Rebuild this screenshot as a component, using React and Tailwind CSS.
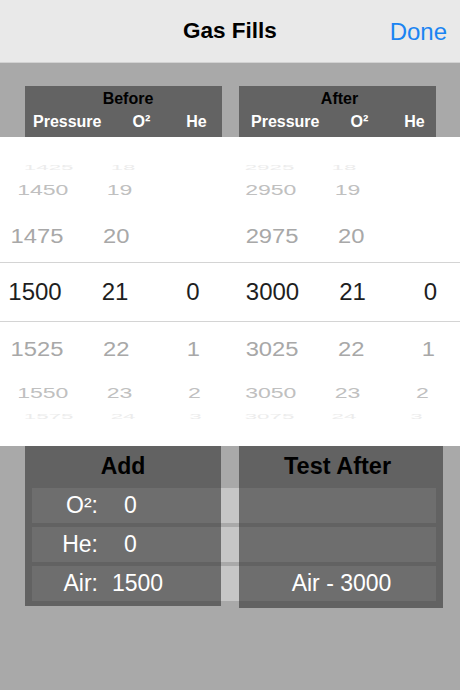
import React from "react";

const font = { fontFamily: '"Liberation Sans", Arial, sans-serif' };

// picker wheel rows: [before pressure, O2, He, after pressure, O2, He]
const wheel = [
  { v: ["1425", "18", "", "2925", "18", ""], h: "h-[20px]", c: "text-[#ececec]", t: "scale-x-[0.93] scale-y-[0.28]" },
  { v: ["1450", "19", "", "2950", "19", ""], h: "h-[26px]", c: "text-[#c0c0c0]", t: "scale-x-[0.96] scale-y-[0.6]" },
  { v: ["1475", "20", "", "2975", "20", ""], h: "h-[59px] pt-[7px]", c: "text-[#a8a8a8]", t: "scale-x-[0.99] scale-y-[0.88]" },
  { v: ["1500", "21", "0", "3000", "21", "0"], h: "h-[60px] border-y border-[#d4d4d4]", c: "text-[#1e1e1e]", t: "" },
  { v: ["1525", "22", "1", "3025", "22", "1"], h: "h-[54px]", c: "text-[#a8a8a8]", t: "scale-x-[0.99] scale-y-[0.88]" },
  { v: ["1550", "23", "2", "3050", "23", "2"], h: "h-[34px]", c: "text-[#c0c0c0]", t: "scale-x-[0.96] scale-y-[0.6]" },
  { v: ["1575", "24", "3", "3075", "24", "3"], h: "h-[10px]", c: "text-[#ececec]", t: "scale-x-[0.93] scale-y-[0.28]" },
];

const WheelRow = ({ row }) => (
  <div className={`${row.h} flex`}>
    <div
      className={`flex-1 grid grid-cols-[70px_90px_66px_93px_67px_15px_59px] items-center text-[24px] leading-none ${row.c} ${row.t}`}
    >
      <span className="text-center">{row.v[0]}</span>
      <span className="text-center">{row.v[1]}</span>
      <span className="text-center">{row.v[2]}</span>
      <span className="text-center">{row.v[3]}</span>
      <span className="text-center">{row.v[4]}</span>
      <span />
      <span className="text-center">{row.v[5]}</span>
    </div>
  </div>
);

const ColumnHead = ({ title, titlePad }) => (
  <div className="w-[197px] h-[51px] bg-[#636363] pt-[3px] flex flex-col">
    <div className={`h-[20px] leading-[20px] text-center text-[16px] font-bold text-black ${titlePad}`}>
      {title}
    </div>
    <div className="mt-[3px] h-[20px] leading-[20px] flex text-[16px] font-bold text-white">
      <span className={title === "Before" ? "ml-[8px]" : "ml-[12px]"}>Pressure</span>
      <span className="ml-[31px]">O²</span>
      <span className="ml-[36px]">He</span>
    </div>
  </div>
);

const Strip = ({ children, className = "" }) => (
  <div className={`h-[35px] bg-[#6e6e6e] flex items-center text-[23px] text-white ${className}`}>
    {children}
  </div>
);

export default function App() {
  return (
    <div className="w-[460px] h-[690px] bg-[#a9a9a9] flex flex-col overflow-hidden" style={font}>
      {/* nav bar */}
      <div className="h-[63px] bg-[#e9e9e9] border-b border-[#d2d2d2] flex items-center relative">
        <div className="flex-1 text-center text-[22.5px] font-bold text-black leading-none">Gas Fills</div>
        <button className="absolute right-[13px] top-[20px] text-[24px] leading-none text-[#1a84f2]">
          Done
        </button>
      </div>

      {/* column headers */}
      <div className="pt-[23px] pl-[25px] flex gap-[17px]">
        <ColumnHead title="Before" titlePad="pl-[9px]" />
        <ColumnHead title="After" titlePad="pl-[4px]" />
      </div>

      {/* picker */}
      <div className="h-[309px] bg-white flex flex-col pt-[20px]">
        {wheel.map((row) => (
          <WheelRow key={row.v[0]} row={row} />
        ))}
      </div>

      {/* results */}
      <div className="pl-[25px] flex items-start">
        <div className="w-[196px] h-[160px] bg-[#626262] pl-[7px] flex flex-col">
          <div className="h-[42px] leading-[40px] text-center pr-[7px] text-[23px] font-bold text-black">Add</div>
          <div className="flex flex-col gap-[4px]">
            <Strip>
              <span className="w-[66px] text-right">O²:</span>
              <span className="ml-[26px]">0</span>
            </Strip>
            <Strip>
              <span className="w-[66px] text-right">He:</span>
              <span className="ml-[26px]">0</span>
            </Strip>
            <Strip>
              <span className="w-[66px] text-right">Air:</span>
              <span className="ml-[14px]">1500</span>
            </Strip>
          </div>
        </div>

        <div className="w-[18px] pt-[42px] flex flex-col gap-[4px]">
          <div className="h-[35px] bg-[#c6c6c6]" />
          <div className="h-[35px] bg-[#c6c6c6]" />
          <div className="h-[35px] bg-[#c6c6c6]" />
        </div>

        <div className="w-[204px] h-[162px] bg-[#626262] pr-[7px] flex flex-col">
          <div className="h-[42px] leading-[40px] text-center pl-[1px] pr-[1px] text-[23.5px] font-bold text-black">
            Test After
          </div>
          <div className="flex flex-col gap-[4px]">
            <Strip />
            <Strip />
            <Strip className="justify-center pl-[8px]">Air - 3000</Strip>
          </div>
        </div>
      </div>
    </div>
  );
}
